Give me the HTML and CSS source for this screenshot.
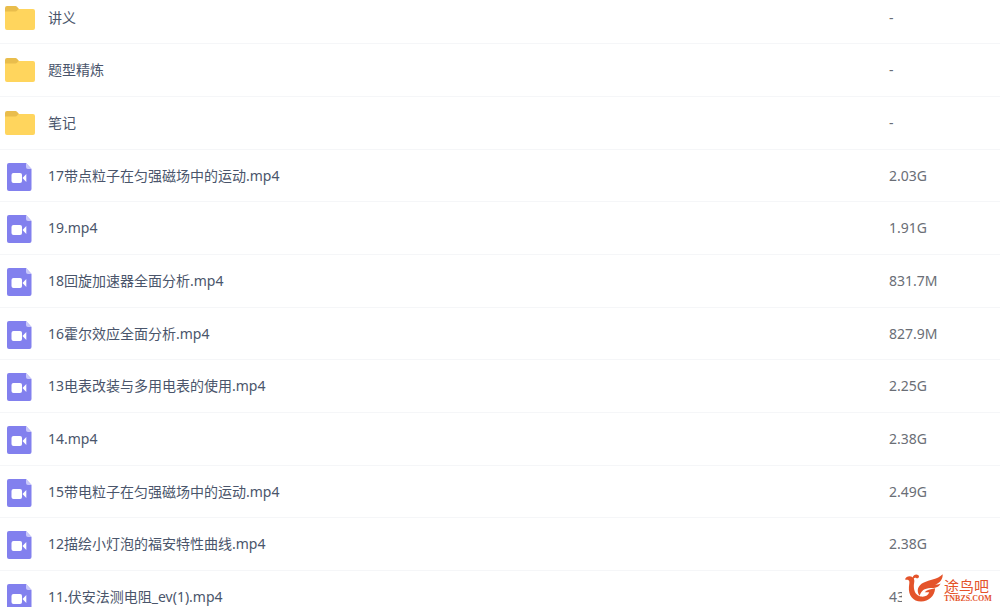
FILE: index.html
```html
<!DOCTYPE html>
<html lang="zh-CN">
<head>
  <meta charset="UTF-8">
  <meta name="viewport" content="width=device-width, initial-scale=1.0">
  <title>文件列表</title>
  <link rel="stylesheet" href="styles.css">
</head>
<body>

<!-- 共用图标 -->
<svg class="sprite" aria-hidden="true">
  <symbol id="folder" viewBox="0 0 32 32">
    <path fill="#e9bd4c" d="M1 6a2 2 0 0 1 2-2h8.500a2 2 0 0 1 1.500.700L15 7v6H1z"/>
    <path fill="#ffd55d" d="M1 9.500h10.500a2 2 0 0 0 1.500-.800l1-1.200a1.500 1.500 0 0 1 1-.500h14a2 2 0 0 1 2 2v17a2 2 0 0 1-2 2H3a2 2 0 0 1-2-2z"/>
  </symbol>
  <symbol id="video" viewBox="0 0 32 32">
    <path fill="#8280ee" d="M5 3h17l5.500 6v20a2 2 0 0 1-2 2H5a2 2 0 0 1-2-2V5a2 2 0 0 1 2-2z"/>
    <path fill="#c9c8fa" d="M22 3l5.500 6H24a2 2 0 0 1-2-2z"/>
    <rect fill="#fff" x="7.500" y="13" width="10.500" height="10" rx="2"/>
    <path fill="#fff" d="M18.500 18l3.800-4v8z"/>
  </symbol>
</svg>

<table class="files">
  <tbody>
    <tr><td><div class="name"><svg class="icon"><use href="#folder"/></svg>讲义</div></td><td class="size">-</td></tr>
    <tr><td><div class="name"><svg class="icon"><use href="#folder"/></svg>题型精炼</div></td><td class="size">-</td></tr>
    <tr><td><div class="name"><svg class="icon"><use href="#folder"/></svg>笔记</div></td><td class="size">-</td></tr>
    <tr><td><div class="name"><svg class="icon"><use href="#video"/></svg>17带点粒子在匀强磁场中的运动.mp4</div></td><td class="size">2.03G</td></tr>
    <tr><td><div class="name"><svg class="icon"><use href="#video"/></svg>19.mp4</div></td><td class="size">1.91G</td></tr>
    <tr><td><div class="name"><svg class="icon"><use href="#video"/></svg>18回旋加速器全面分析.mp4</div></td><td class="size">831.7M</td></tr>
    <tr><td><div class="name"><svg class="icon"><use href="#video"/></svg>16霍尔效应全面分析.mp4</div></td><td class="size">827.9M</td></tr>
    <tr><td><div class="name"><svg class="icon"><use href="#video"/></svg>13电表改装与多用电表的使用.mp4</div></td><td class="size">2.25G</td></tr>
    <tr><td><div class="name"><svg class="icon"><use href="#video"/></svg>14.mp4</div></td><td class="size">2.38G</td></tr>
    <tr><td><div class="name"><svg class="icon"><use href="#video"/></svg>15带电粒子在匀强磁场中的运动.mp4</div></td><td class="size">2.49G</td></tr>
    <tr><td><div class="name"><svg class="icon"><use href="#video"/></svg>12描绘小灯泡的福安特性曲线.mp4</div></td><td class="size">2.38G</td></tr>
    <tr><td><div class="name"><svg class="icon"><use href="#video"/></svg>11.伏安法测电阻_ev(1).mp4</div></td><td class="size">43</td></tr>
  </tbody>
</table>

<div class="logo">
  <svg class="bird" viewBox="0 0 116 84" aria-hidden="true">
    <g fill="#e4532a">
      <path d="M0 15C4 5 16 3 24 10c8 8 3 15 3 27 0 17 8 29 21 31 14 2 23-4 26-13l-14 0c6-7 17-9 32-12-2 25-19 40-43 40C24 83 10 64 12 38c1-10 3-17-1-20-4-3-8 0-11-3z"/>
      <path d="M45 66C33 50 40 34 56 26 76 16 98 17 115 0c1 14-9 28-23 31 8 1 13-1 17-3-6 12-18 14-31 14-19 1-29 8-33 24z"/>
      <path d="M23 10c3-8 10-12 17-8 6 4 1 12-5 10-4-2-7-1-9 3z"/>
    </g>
  </svg>
  <div class="brand">
    <span class="brand-name">途鸟吧</span>
    <span class="brand-url">TNBZS.COM</span>
  </div>
</div>

</body>
</html>
```
FILE: styles.css
```css
body {
  margin: 0;
  height: 100vh;
  overflow: hidden;
  position: relative;
  background-color: #fff;
  font-family: "Noto Sans", "Noto Sans CJK SC", sans-serif;
  font-size: 14px;
  line-height: 20px;
  color: #4a556b;
}
.sprite {
  display: none;
}
.files {
  width: 100%;
  border-collapse: separate;
  border-spacing: 0;
}
.files td {
  box-sizing: border-box;
  height: 53px;
  padding: 0;
  border-bottom: 1px solid #f5f6f8;
  vertical-align: middle;
}
.files tr:nth-child(3n+1) td {
  height: 52px;
}
.files tr:first-child td {
  height: 44px;
  padding-bottom: 8px;
}
.name {
  display: flex;
  align-items: center;
  gap: 12px;
  padding-left: 4px;
}
.icon {
  width: 32px;
  height: 32px;
}
.files .size {
  width: 111px;
  color: #6a6e76;
}
.logo {
  position: absolute;
  right: 0;
  bottom: 0;
  display: flex;
  align-items: center;
  gap: 1px;
  box-sizing: border-box;
  width: 98px;
  height: 35px;
  padding: 0 0 3px 3px;
  background-color: #fff;
  color: #e4532a;
}
.bird {
  width: 38px;
  height: 28px;
}
.brand {
  display: flex;
  flex-direction: column;
  padding-top: 4px;
}
.brand-name {
  font-size: 15px;
  line-height: 16px;
}
.brand-url {
  font-family: "Liberation Serif", serif;
  font-size: 8px;
  font-weight: bold;
  line-height: 9px;
}
```
